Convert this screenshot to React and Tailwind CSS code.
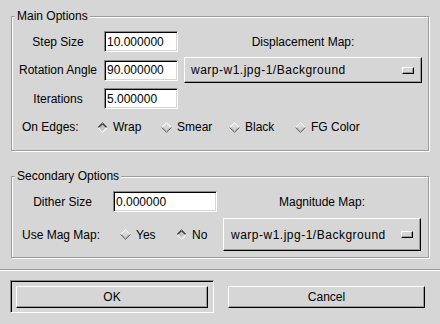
import React from 'react'

const font = { fontFamily: '"Liberation Sans", Arial, sans-serif' }

function Radio({ checked, label, className = '' }) {
  const top = checked ? '#6e6e6e' : '#ffffff'
  const bottom = checked ? '#ffffff' : '#6e6e6e'
  const topIn = checked ? '#000000' : '#e8e8e8'
  const bottomIn = checked ? '#ebebeb' : '#9a9a9a'
  return (
    <div className={`flex items-center ${className}`}>
      <svg width="11" height="11" viewBox="0 0 11 11" className="shrink-0">
        <polygon points="5.5,1 10,5.5 5.5,10 1,5.5" fill={checked ? '#c4c4c4' : '#d6d6d6'} />
        <polyline points="0.5,5.5 5.5,0.5 10.5,5.5" fill="none" stroke={top} strokeWidth="1" />
        <polyline points="0.5,5.5 5.5,10.5 10.5,5.5" fill="none" stroke={bottom} strokeWidth="1" />
        <polyline points="1.8,5.5 5.5,1.8 9.2,5.5" fill="none" stroke={topIn} strokeWidth="1" />
        <polyline points="1.8,5.5 5.5,9.2 9.2,5.5" fill="none" stroke={bottomIn} strokeWidth="1" />
      </svg>
      <span className="ml-[5px]">{label}</span>
    </div>
  )
}

function Entry({ value, className = '' }) {
  return (
    <div
      className={`h-[21px] bg-white border border-t-[#8a8a8a] border-l-[#8a8a8a] border-b-white border-r-white shadow-[inset_1px_1px_0_#000,inset_-1px_-1px_0_#d6d6d6] flex items-center pl-[2px] ${className}`}
    >
      {value}
    </div>
  )
}

function OptionMenu({ value, className = '' }) {
  return (
    <div
      className={`bg-[#d6d6d6] border border-t-white border-l-white border-b-black border-r-black shadow-[inset_-1px_-1px_0_#9a9a9a] flex items-center justify-between pr-[7px] ${className}`}
    >
      <span className="tracking-[0.5px]">{value}</span>
      <div className="w-[12px] h-[7px] border border-t-white border-l-white border-b-black border-r-black shadow-[inset_-1px_-1px_0_#9a9a9a]" />
    </div>
  )
}

function Frame({ title, className = '', children }) {
  return (
    <div
      className={`relative border border-[#9c9c9c] shadow-[inset_1px_1px_0_#fff,1px_1px_0_#fff] ${className}`}
    >
      <span className="absolute left-[3px] top-[-8px] leading-[14px] px-[2px] bg-[#d6d6d6]">{title}</span>
      {children}
    </div>
  )
}

function Button({ children, className = '' }) {
  return (
    <div
      className={`h-[22px] bg-[#d6d6d6] border border-t-white border-l-white border-b-black border-r-black shadow-[inset_-1px_-1px_0_#9a9a9a] flex items-center justify-center ${className}`}
    >
      {children}
    </div>
  )
}

export default function App() {
  return (
    <div style={font} className="w-[440px] h-[324px] bg-[#d6d6d6] text-[12px] text-black flex flex-col overflow-hidden">
      <Frame title="Main Options" className="mt-[16px] ml-[11px] w-[418px] h-[135px] pt-[14px]">
        <div className="flex items-center h-[21px]">
          <div className="w-[92px] text-center">Step Size</div>
          <Entry value="10.000000" className="w-[74px]" />
          <div className="ml-[6px] w-[238px] text-center">Displacement Map:</div>
        </div>
        <div className="flex items-center h-[26px] mt-[5px]">
          <div className="w-[92px] text-center">Rotation Angle</div>
          <Entry value="90.000000" className="w-[74px]" />
          <OptionMenu value="warp-w1.jpg-1/Background" className="ml-[6px] w-[238px] h-[26px] pl-[6px]" />
        </div>
        <div className="flex items-center h-[21px] mt-[5px]">
          <div className="w-[92px] text-center">Iterations</div>
          <Entry value="5.000000" className="w-[74px]" />
        </div>
        <div className="flex items-center h-[20px] mt-[8px]">
          <div className="w-[85px] pl-[10px]">On Edges:</div>
          <Radio checked label="Wrap" className="w-[64px]" />
          <Radio label="Smear" className="w-[68px]" />
          <Radio label="Black" className="w-[66px]" />
          <Radio label="FG Color" />
        </div>
      </Frame>

      <Frame title="Secondary Options" className="mt-[25px] ml-[11px] w-[418px] h-[82px] pt-[14px]">
        <div className="flex items-center h-[21px]">
          <div className="w-[101px] text-center">Dither Size</div>
          <Entry value="0.000000" className="w-[104px]" />
          <div className="ml-[6px] w-[198px] text-center">Magnitude Map:</div>
        </div>
        <div className="flex items-center h-[33px] mt-[6px]">
          <div className="w-[108px] pl-[10px]">Use Mag Map:</div>
          <Radio label="Yes" className="w-[56px]" />
          <Radio checked label="No" className="w-[41px]" />
          <OptionMenu value="warp-w1.jpg-1/Background" className="ml-[6px] w-[198px] h-[33px] pl-[7px]" />
        </div>
      </Frame>

      <div className="mt-[11px] h-px bg-[#9c9c9c] shadow-[0_1px_0_#fff]" />

      <div className="flex items-center mt-[10px]">
        <div className="ml-[10px] w-[204px] h-[33px] p-[5px] border border-t-[#8a8a8a] border-l-[#8a8a8a] border-b-white border-r-white shadow-[inset_1px_1px_0_#000]">
          <Button className="w-full">OK</Button>
        </div>
        <Button className="ml-[14px] w-[197px]">Cancel</Button>
      </div>
    </div>
  )
}
